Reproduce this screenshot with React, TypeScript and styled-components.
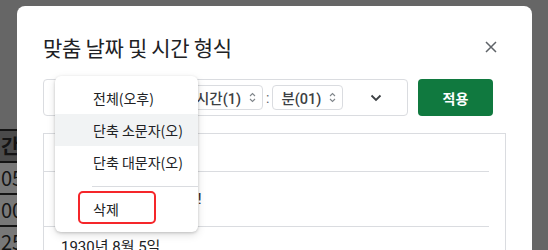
import styled, { createGlobalStyle } from "styled-components";

const GlobalStyle = createGlobalStyle`
  html, body {
    margin: 0;
    padding: 0;
    width: 548px;
    height: 250px;
    overflow: hidden;
    background: #666666;
    font-family: Roboto, "Noto Sans CJK KR", sans-serif;
  }
`;

const Page = styled.div`
  display: flex;
  align-items: flex-start;
  width: 548px;
  height: 250px;
  overflow: hidden;
`;

const SheetStrip = styled.div`
  width: 17px;
  flex-shrink: 0;
  padding-top: 129px;
  overflow: hidden;
`;

const SheetCell = styled.div<{ header?: boolean }>`
  height: 30px;
  border-top: 2px solid #151515;
  background: ${(p) => (p.header ? "#4b4b4b" : "#787878")};
  color: #141414;
  font-family: "Noto Sans CJK KR", sans-serif;
  font-size: 20px;
  font-weight: ${(p) => (p.header ? 700 : 400)};
  line-height: 30px;
  white-space: nowrap;
  padding-left: 1px;
`;

const Modal = styled.div`
  margin-top: 6px;
  width: 515px;
  height: 260px;
  flex-shrink: 0;
  box-sizing: border-box;
  background: #ffffff;
  border-radius: 8px 8px 0 0;
  padding: 27px 26px 0 26px;
`;

const TitleRow = styled.div`
  display: flex;
  align-items: center;
  justify-content: space-between;
  height: 28px;
`;

const Title = styled.h2`
  margin: 0;
  font-family: "Noto Sans CJK KR", sans-serif;
  font-size: 21px;
  font-weight: 400;
  color: #202124;
  line-height: 28px;
  letter-spacing: -0.3px;
`;

const CloseButton = styled.div`
  width: 24px;
  height: 24px;
  margin-right: 3px;
  display: flex;
  align-items: center;
  justify-content: center;
`;

const FormatRow = styled.div`
  position: relative;
  display: flex;
  gap: 10px;
  margin-top: 18px;
`;

const FormatInput = styled.div`
  width: 365px;
  height: 37px;
  box-sizing: border-box;
  border: 1px solid #dadce0;
  border-radius: 4px;
  display: flex;
  align-items: center;
  padding: 0 25px 0 14px;
`;

const Chip = styled.div<{ width?: number }>`
  height: 25px;
  box-sizing: border-box;
  ${(p) => (p.width ? `width: ${p.width}px; margin-right: 10px;` : "")}
  border: 1px solid #dadce0;
  border-radius: 4px;
  display: flex;
  align-items: center;
  gap: 8px;
  padding: 0 6px 0 8px;
  font-family: Roboto, "Noto Sans CJK KR", sans-serif;
  font-size: 14.5px;
  font-weight: 500;
  color: #3c4043;
  white-space: nowrap;
`;

const Colon = styled.span`
  margin: 0 3px;
  font-size: 14px;
  color: #5f6368;
`;

const Spacer = styled.div`
  flex: 1;
`;

const ApplyButton = styled.button`
  width: 75px;
  height: 37px;
  border: none;
  border-radius: 4px;
  background: #10793f;
  color: #ffffff;
  font-family: "Noto Sans CJK KR", sans-serif;
  font-size: 14px;
  font-weight: 700;
  padding: 0;
`;

const Menu = styled.div`
  position: absolute;
  left: 12px;
  top: -3px;
  width: 143px;
  background: #ffffff;
  border-radius: 6px;
  box-shadow: 0 1px 3px rgba(0, 0, 0, 0.18), 0 3px 8px rgba(0, 0, 0, 0.12);
  padding: 6px 0 7px;
  z-index: 2;
`;

const MenuItem = styled.div<{ active?: boolean }>`
  height: 32px;
  display: flex;
  align-items: center;
  padding-left: 38px;
  background: ${(p) => (p.active ? "#f1f3f4" : "transparent")};
  font-family: "Noto Sans CJK KR", sans-serif;
  font-size: 14px;
  color: #202124;
`;

const MenuDivider = styled.div`
  height: 1px;
  background: #dadce0;
  margin: 8px 0 6px 37px;
`;

const Highlight = styled.div`
  position: absolute;
  left: 23px;
  top: 115px;
  width: 78px;
  height: 33px;
  box-sizing: border-box;
  border: 2px solid #f5262a;
  border-radius: 5px;
`;

const ListBox = styled.div`
  margin-top: 17px;
  width: 463px;
  height: 160px;
  box-sizing: border-box;
  border: 1px solid #dadce0;
  border-bottom: none;
  padding-right: 16px;
`;

const ListRow = styled.div<{ h: number; top?: boolean }>`
  height: ${(p) => p.h}px;
  box-sizing: border-box;
  display: flex;
  align-items: ${(p) => (p.top ? "flex-start" : "center")};
  padding: ${(p) => (p.top ? "11px 0 0 17px" : "0 0 0 17px")};
  border-bottom: 1px solid #dadce0;
  font-family: Roboto, "Noto Sans CJK KR", sans-serif;
  font-size: 15px;
  line-height: 18px;
  color: #202124;
  white-space: nowrap;
  &:last-child {
    border-bottom: none;
  }
`;

function UpDown() {
  return (
    <svg width="7" height="11" viewBox="0 0 7 11" fill="none">
      <path d="M1 4 L3.5 1.5 L6 4" stroke="#80868b" strokeWidth="1.1" />
      <path d="M1 7 L3.5 9.5 L6 7" stroke="#80868b" strokeWidth="1.1" />
    </svg>
  );
}

function App() {
  return (
    <>
      <GlobalStyle />
      <Page>
        <SheetStrip>
          <SheetCell header>간</SheetCell>
          <SheetCell>05</SheetCell>
          <SheetCell>00</SheetCell>
          <SheetCell>25</SheetCell>
        </SheetStrip>
        <Modal>
          <TitleRow>
            <Title>맞춤 날짜 및 시간 형식</Title>
            <CloseButton>
              <svg width="12" height="12" viewBox="0 0 12 12">
                <path d="M1 1 L11 11 M11 1 L1 11" stroke="#5f6368" strokeWidth="1.5" />
              </svg>
            </CloseButton>
          </TitleRow>
          <FormatRow>
            <FormatInput>
              <Chip width={119}>
                전체(오후) <UpDown />
              </Chip>
              <Chip>
                시간(1) <UpDown />
              </Chip>
              <Colon>:</Colon>
              <Chip>
                분(01) <UpDown />
              </Chip>
              <Spacer />
              <svg width="12" height="8" viewBox="0 0 12 8">
                <path d="M1.5 1.5 L6 6 L10.5 1.5" stroke="#3c4043" strokeWidth="1.8" fill="none" />
              </svg>
            </FormatInput>
            <ApplyButton>적용</ApplyButton>
            <Menu>
              <MenuItem>전체(오후)</MenuItem>
              <MenuItem active>단축 소문자(오)</MenuItem>
              <MenuItem>단축 대문자(오)</MenuItem>
              <MenuDivider />
              <MenuItem>삭제</MenuItem>
              <Highlight />
            </Menu>
          </FormatRow>
          <ListBox>
            <ListRow h={38}>오후 1:01</ListRow>
            <ListRow h={55}>1930년 8월 5일, 01분!</ListRow>
            <ListRow h={55} top>
              1930년 8월 5일
            </ListRow>
          </ListBox>
        </Modal>
      </Page>
    </>
  );
}

export default App;
